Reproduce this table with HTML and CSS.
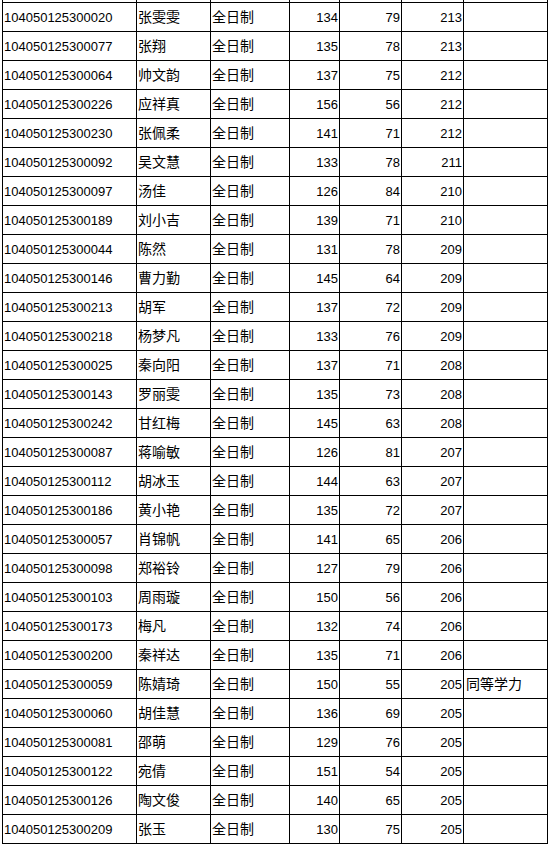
FILE: index.html
```html
<!DOCTYPE html>
<html lang="zh-CN">
<head>
<meta charset="utf-8">
<title>名单</title>
<link rel="stylesheet" href="styles.css">
</head>
<body>
<div class="sheet">
  <div class="c"></div><div class="c"></div><div class="c"></div><div class="c"></div><div class="c"></div><div class="c"></div><div class="c"></div>
  <div class="c id">104050125300020</div><div class="c zh">张雯雯</div><div class="c zh">全日制</div><div class="c num">134</div><div class="c num">79</div><div class="c num">213</div><div class="c zh note"></div>
  <div class="c id">104050125300077</div><div class="c zh">张翔</div><div class="c zh">全日制</div><div class="c num">135</div><div class="c num">78</div><div class="c num">213</div><div class="c zh note"></div>
  <div class="c id">104050125300064</div><div class="c zh">帅文韵</div><div class="c zh">全日制</div><div class="c num">137</div><div class="c num">75</div><div class="c num">212</div><div class="c zh note"></div>
  <div class="c id">104050125300226</div><div class="c zh">应祥真</div><div class="c zh">全日制</div><div class="c num">156</div><div class="c num">56</div><div class="c num">212</div><div class="c zh note"></div>
  <div class="c id">104050125300230</div><div class="c zh">张佩柔</div><div class="c zh">全日制</div><div class="c num">141</div><div class="c num">71</div><div class="c num">212</div><div class="c zh note"></div>
  <div class="c id">104050125300092</div><div class="c zh">吴文慧</div><div class="c zh">全日制</div><div class="c num">133</div><div class="c num">78</div><div class="c num">211</div><div class="c zh note"></div>
  <div class="c id">104050125300097</div><div class="c zh">汤佳</div><div class="c zh">全日制</div><div class="c num">126</div><div class="c num">84</div><div class="c num">210</div><div class="c zh note"></div>
  <div class="c id">104050125300189</div><div class="c zh">刘小吉</div><div class="c zh">全日制</div><div class="c num">139</div><div class="c num">71</div><div class="c num">210</div><div class="c zh note"></div>
  <div class="c id">104050125300044</div><div class="c zh">陈然</div><div class="c zh">全日制</div><div class="c num">131</div><div class="c num">78</div><div class="c num">209</div><div class="c zh note"></div>
  <div class="c id">104050125300146</div><div class="c zh">曹力勤</div><div class="c zh">全日制</div><div class="c num">145</div><div class="c num">64</div><div class="c num">209</div><div class="c zh note"></div>
  <div class="c id">104050125300213</div><div class="c zh">胡军</div><div class="c zh">全日制</div><div class="c num">137</div><div class="c num">72</div><div class="c num">209</div><div class="c zh note"></div>
  <div class="c id">104050125300218</div><div class="c zh">杨梦凡</div><div class="c zh">全日制</div><div class="c num">133</div><div class="c num">76</div><div class="c num">209</div><div class="c zh note"></div>
  <div class="c id">104050125300025</div><div class="c zh">秦向阳</div><div class="c zh">全日制</div><div class="c num">137</div><div class="c num">71</div><div class="c num">208</div><div class="c zh note"></div>
  <div class="c id">104050125300143</div><div class="c zh">罗丽雯</div><div class="c zh">全日制</div><div class="c num">135</div><div class="c num">73</div><div class="c num">208</div><div class="c zh note"></div>
  <div class="c id">104050125300242</div><div class="c zh">甘红梅</div><div class="c zh">全日制</div><div class="c num">145</div><div class="c num">63</div><div class="c num">208</div><div class="c zh note"></div>
  <div class="c id">104050125300087</div><div class="c zh">蒋喻敏</div><div class="c zh">全日制</div><div class="c num">126</div><div class="c num">81</div><div class="c num">207</div><div class="c zh note"></div>
  <div class="c id">104050125300112</div><div class="c zh">胡冰玉</div><div class="c zh">全日制</div><div class="c num">144</div><div class="c num">63</div><div class="c num">207</div><div class="c zh note"></div>
  <div class="c id">104050125300186</div><div class="c zh">黄小艳</div><div class="c zh">全日制</div><div class="c num">135</div><div class="c num">72</div><div class="c num">207</div><div class="c zh note"></div>
  <div class="c id">104050125300057</div><div class="c zh">肖锦帆</div><div class="c zh">全日制</div><div class="c num">141</div><div class="c num">65</div><div class="c num">206</div><div class="c zh note"></div>
  <div class="c id">104050125300098</div><div class="c zh">郑裕铃</div><div class="c zh">全日制</div><div class="c num">127</div><div class="c num">79</div><div class="c num">206</div><div class="c zh note"></div>
  <div class="c id">104050125300103</div><div class="c zh">周雨璇</div><div class="c zh">全日制</div><div class="c num">150</div><div class="c num">56</div><div class="c num">206</div><div class="c zh note"></div>
  <div class="c id">104050125300173</div><div class="c zh">梅凡</div><div class="c zh">全日制</div><div class="c num">132</div><div class="c num">74</div><div class="c num">206</div><div class="c zh note"></div>
  <div class="c id">104050125300200</div><div class="c zh">秦祥达</div><div class="c zh">全日制</div><div class="c num">135</div><div class="c num">71</div><div class="c num">206</div><div class="c zh note"></div>
  <div class="c id">104050125300059</div><div class="c zh">陈婧琦</div><div class="c zh">全日制</div><div class="c num">150</div><div class="c num">55</div><div class="c num">205</div><div class="c zh note">同等学力</div>
  <div class="c id">104050125300060</div><div class="c zh">胡佳慧</div><div class="c zh">全日制</div><div class="c num">136</div><div class="c num">69</div><div class="c num">205</div><div class="c zh note"></div>
  <div class="c id">104050125300081</div><div class="c zh">邵萌</div><div class="c zh">全日制</div><div class="c num">129</div><div class="c num">76</div><div class="c num">205</div><div class="c zh note"></div>
  <div class="c id">104050125300122</div><div class="c zh">宛倩</div><div class="c zh">全日制</div><div class="c num">151</div><div class="c num">54</div><div class="c num">205</div><div class="c zh note"></div>
  <div class="c id">104050125300126</div><div class="c zh">陶文俊</div><div class="c zh">全日制</div><div class="c num">140</div><div class="c num">65</div><div class="c num">205</div><div class="c zh note"></div>
  <div class="c id">104050125300209</div><div class="c zh">张玉</div><div class="c zh">全日制</div><div class="c num">130</div><div class="c num">75</div><div class="c num">205</div><div class="c zh note"></div>
</div>
</body>
</html>
```
FILE: styles.css
```css
html, body {
  margin: 0;
  padding: 0;
  background: #ffffff;
}

body {
  color: #000000;
  font-family: "Liberation Sans", "Noto Sans CJK SC", sans-serif;
}

.sheet {
  display: grid;
  grid-template-columns: 134px 74px 79px 50px 62px 62px 84px;
  grid-template-rows: 3px;
  grid-auto-rows: 29px;
  width: 546px;
  margin-left: 2px;
  border-left: 1px solid #000;
}

.c {
  box-sizing: border-box;
  border-right: 1px solid #000;
  border-bottom: 1px solid #000;
  display: flex;
  align-items: center;
  white-space: nowrap;
  overflow: hidden;
  line-height: 1;
}

.id {
  font-size: 13px;
  padding-left: 1px;
}

.zh {
  font-size: 14px;
  padding-left: 1px;
}

.note {
  padding-left: 2px;
}

.num {
  font-size: 13px;
  justify-content: flex-end;
  padding-right: 1px;
}
```
